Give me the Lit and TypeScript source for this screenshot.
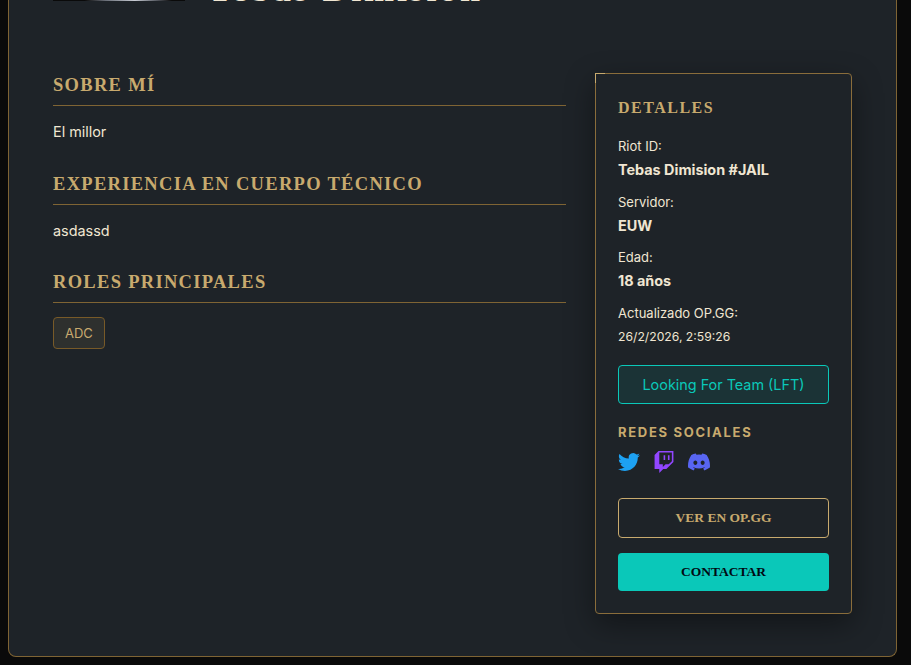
import { LitElement, html, css } from 'lit';
import { customElement } from 'lit/decorators.js';

const details = [
  { label: 'Riot ID:', value: 'Tebas Dimision #JAIL' },
  { label: 'Servidor:', value: 'EUW' },
  { label: 'Edad:', value: '18 años' },
];

const sections = [
  { title: 'Sobre mí', text: 'El millor' },
  { title: 'Experiencia en cuerpo técnico', text: 'asdassd' },
];

@customElement('app-root')
export class AppRoot extends LitElement {
  static styles = css`
    :host {
      display: block;
      height: 665px;
      overflow: hidden;
      background: #0a0a0a;
      font-family: Inter, 'Liberation Sans', sans-serif;
    }

    .panel {
      box-sizing: border-box;
      height: 657px;
      margin: 0 14px 0 8px;
      padding: 73px 44px 0;
      display: flex;
      justify-content: space-between;
      align-items: flex-start;
      position: relative;
      overflow: hidden;
      background: #1e2328;
      border: 1px solid #7f6434;
      border-top: none;
      border-radius: 0 0 8px 8px;
    }

    /* bottom edge of the banner avatar, scrolled out of view */
    .avatar-edge {
      position: absolute;
      left: 44px;
      top: 0;
      width: 132px;
      height: 1px;
      background: linear-gradient(90deg, #0a0a0a 0%, #0a0a0a 24%, #6a6f78 40%, #c8ccd4 62%, #5a5e66 78%, #0a0a0a 90%);
    }

    .clipped-title {
      position: absolute;
      left: 199px;
      top: -32px;
      margin: 0;
      font: 700 36px 'Liberation Serif', serif;
      letter-spacing: 2.8px;
      color: #f0e6d2;
      white-space: nowrap;
    }

    .main {
      width: 513px;
    }

    h2 {
      margin: 0 0 14px;
      padding-bottom: 8px;
      font: 700 18.5px/24px 'Liberation Serif', serif;
      letter-spacing: 1.3px;
      text-transform: uppercase;
      color: #c8aa6e;
      border-bottom: 1px solid #7f6434;
    }

    .main p {
      margin: 0 0 27.5px;
      font-size: 14.4px;
      line-height: 24px;
      color: #f0e6d2;
    }

    .role {
      display: inline-block;
      padding: 8px 11px;
      font-size: 13px;
      line-height: 14px;
      color: #c8aa6e;
      background: rgba(200, 170, 110, 0.1);
      border: 1px solid #785a28;
      border-radius: 4px;
    }

    .card {
      box-sizing: border-box;
      width: 257px;
      height: 541px;
      padding: 23px 22px;
      position: relative;
      background: #1e2328;
      border: 1px solid #8a6d3b;
      border-radius: 0 4px 4px 4px;
      box-shadow: 0 10px 30px rgba(0, 0, 0, 0.4);
    }

    .card::before {
      content: '';
      position: absolute;
      left: -1px;
      top: -1px;
      width: 9px;
      height: 9px;
      border-top: 1px solid #c8aa6e;
      border-left: 1px solid #c8aa6e;
    }

    h3 {
      margin: 0 0 18.2px;
      font: 700 16px/21px 'Liberation Serif', serif;
      letter-spacing: 1.5px;
      text-transform: uppercase;
      color: #c8aa6e;
    }

    .detail {
      margin-bottom: 11.5px;
      font-size: 13px;
      line-height: 21px;
      color: #f0e6d2;
    }

    .detail strong {
      display: block;
      margin-top: 2px;
      font-size: 14.4px;
      font-weight: 700;
    }

    .detail span {
      display: block;
      margin-top: 2px;
      font-size: 12.2px;
    }

    .lft {
      box-sizing: border-box;
      height: 39px;
      margin-top: 18.5px;
      display: flex;
      align-items: center;
      justify-content: center;
      font-size: 14.4px;
      color: #0ac8b9;
      background: rgba(10, 200, 185, 0.1);
      border: 1px solid #0ac8b9;
      border-radius: 4px;
    }

    h4 {
      margin: 21px 0 11px;
      font-size: 13px;
      line-height: 15px;
      font-weight: 700;
      letter-spacing: 1.7px;
      text-transform: uppercase;
      color: #c8aa6e;
    }

    .socials {
      display: flex;
      gap: 13px;
      height: 24px;
    }

    .socials svg {
      width: 22px;
      height: 22px;
      display: block;
    }

    .btn {
      box-sizing: border-box;
      height: 40px;
      display: flex;
      align-items: center;
      justify-content: center;
      font: 700 13.5px 'Liberation Serif', serif;
      text-transform: uppercase;
      border-radius: 4px;
    }

    .btn.outline {
      margin-top: 23px;
      color: #c8aa6e;
      border: 1px solid #c8aa6e;
    }

    .btn.solid {
      height: 38px;
      margin-top: 15px;
      color: #010a13;
      background: #0ac8b9;
    }
  `;

  render() {
    return html`
      <div class="panel">
        <div class="avatar-edge"></div>
        <h1 class="clipped-title">Tebas Dimision</h1>
        <div class="main">
          ${sections.map(
            (s) => html`
              <h2>${s.title}</h2>
              <p>${s.text}</p>
            `,
          )}
          <h2>Roles principales</h2>
          <span class="role">ADC</span>
        </div>
        <aside class="card">
          <h3>Detalles</h3>
          ${details.map(
            (d) => html`
              <div class="detail">${d.label}<strong>${d.value}</strong></div>
            `,
          )}
          <div class="detail">Actualizado OP.GG:<span>26/2/2026, 2:59:26</span></div>
          <div class="lft">Looking For Team (LFT)</div>
          <h4>Redes sociales</h4>
          <div class="socials">
            <svg viewBox="0 0 24 24" fill="#1da1f2">
              <path d="M23.95 4.57a10 10 0 0 1-2.82.77 4.96 4.96 0 0 0 2.16-2.72c-.95.55-2 .95-3.12 1.18a4.92 4.92 0 0 0-8.38 4.48C7.69 8.1 4.07 6.13 1.64 3.16a4.82 4.82 0 0 0-.67 2.48c0 1.71.87 3.21 2.19 4.1a4.9 4.9 0 0 1-2.23-.62v.06a4.92 4.92 0 0 0 3.95 4.83 5 5 0 0 1-2.21.08 4.94 4.94 0 0 0 4.6 3.42A9.87 9.87 0 0 1 0 19.54a14 14 0 0 0 7.56 2.21c9.05 0 14-7.5 14-13.98 0-.21 0-.42-.02-.63a9.94 9.94 0 0 0 2.41-2.57z"/>
            </svg>
            <svg viewBox="0 0 24 24" fill="#9146ff">
              <path d="M11.571 4.714h1.715v5.143H11.57zm4.715 0H18v5.143h-1.714zM6 0 1.714 4.286v15.428h5.143V24l4.286-4.286h3.428L22.286 12V0zm14.571 11.143-3.428 3.428h-3.429l-3 3v-3H6.857V1.714h13.714z"/>
            </svg>
            <svg viewBox="0 0 24 24" fill="#5865f2">
              <path d="M20.32 4.37a19.8 19.8 0 0 0-4.89-1.52.07.07 0 0 0-.08.04c-.21.38-.44.87-.61 1.25a18.27 18.27 0 0 0-5.49 0 12.6 12.6 0 0 0-.62-1.25.08.08 0 0 0-.08-.04 19.74 19.74 0 0 0-4.88 1.52.07.07 0 0 0-.03.03C.53 9.05-.32 13.58.1 18.06a.08.08 0 0 0 .03.06 19.9 19.9 0 0 0 5.99 3.03.08.08 0 0 0 .08-.03c.46-.63.87-1.29 1.23-1.99a.08.08 0 0 0-.04-.11 13.1 13.1 0 0 1-1.87-.89.08.08 0 0 1-.01-.13c.13-.09.25-.19.37-.29a.07.07 0 0 1 .08-.01c3.93 1.79 8.18 1.79 12.06 0a.07.07 0 0 1 .08.01c.12.1.25.2.37.29a.08.08 0 0 1-.01.13c-.6.35-1.22.65-1.87.89a.08.08 0 0 0-.04.11c.36.7.78 1.36 1.23 1.99a.08.08 0 0 0 .08.03 19.84 19.84 0 0 0 6-3.03.08.08 0 0 0 .03-.06c.5-5.18-.84-9.67-3.55-13.66a.06.06 0 0 0-.03-.03zM8.02 15.33c-1.18 0-2.16-1.09-2.16-2.42s.96-2.42 2.16-2.42c1.21 0 2.18 1.1 2.16 2.42 0 1.33-.96 2.42-2.16 2.42zm7.97 0c-1.18 0-2.16-1.09-2.16-2.42s.96-2.42 2.16-2.42c1.21 0 2.18 1.1 2.16 2.42 0 1.33-.95 2.42-2.16 2.42z"/>
            </svg>
          </div>
          <div class="btn outline">Ver en OP.GG</div>
          <div class="btn solid">Contactar</div>
        </aside>
      </div>
    `;
  }
}

declare global {
  interface HTMLElementTagNameMap {
    'app-root': AppRoot;
  }
}
